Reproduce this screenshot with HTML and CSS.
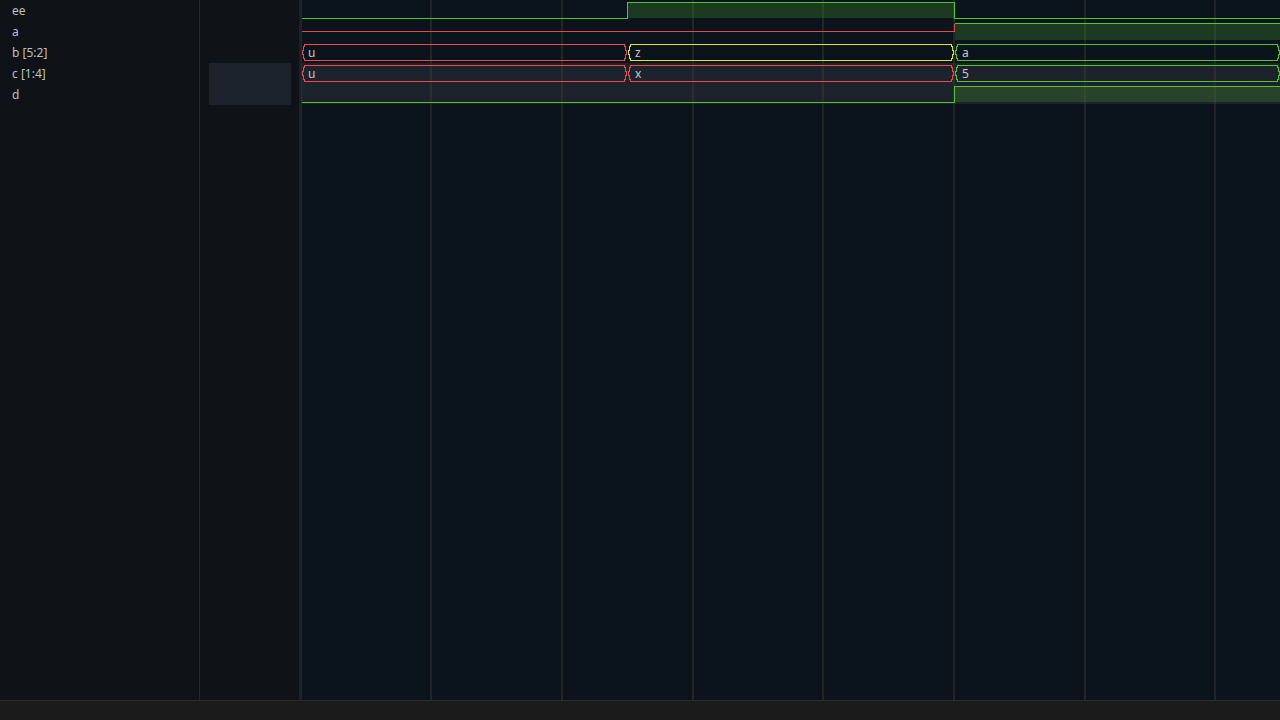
FILE: index.html
```html
<!DOCTYPE html>
<html>
<head>
<meta charset="utf-8">
<link rel="stylesheet" href="styles.css">
</head>
<body>
<div class="app">
  <div class="main">
    <div class="names">
      <div class="name">ee</div>
      <div class="name">a</div>
      <div class="name">b [5:2]</div>
      <div class="name">c [1:4]</div>
      <div class="name">d</div>
    </div>
    <div class="values">
      <div class="vrow"></div>
      <div class="vrow"></div>
      <div class="vrow"></div>
      <div class="vsel"></div>
    </div>
    <div class="sep"></div>
    <div class="wave">
      <svg class="canvas" width="979" height="700" viewBox="0 0 979 700" shape-rendering="crispEdges">
        <rect x="0" y="63" width="979" height="41" fill="#1c232c"/>
        <g fill="rgba(62,58,48,0.45)">
          <rect x="0" y="0" width="1" height="700"/>
          <rect x="129" y="0" width="2" height="700"/>
          <rect x="260" y="0" width="2" height="700"/>
          <rect x="391" y="0" width="2" height="700"/>
          <rect x="521" y="0" width="2" height="700"/>
          <rect x="652" y="0" width="2" height="700"/>
          <rect x="783" y="0" width="2" height="700"/>
          <rect x="913" y="0" width="2" height="700"/>
        </g>
        <!-- ee -->
        <rect x="327" y="3" width="326" height="15" fill="rgba(59,128,43,0.35)"/>
        <path d="M1 18.5 H326.5 V2.5 H653.5 V18.5 H979" fill="none" stroke="#52c424" stroke-width="1"/>
        <!-- a -->
        <rect x="654" y="24" width="325" height="16" fill="rgba(59,128,43,0.35)"/>
        <path d="M1 31.5 H653.5 V23.5" fill="none" stroke="#e84848" stroke-width="1"/>
        <path d="M654 23.5 H979" fill="none" stroke="#52c424" stroke-width="1"/>
        <!-- b, c -->
        <g fill="none" stroke-width="1.2">
          <polygon points="1.5,52.5 3.5,44.5 323.5,44.5 325.5,52.5 323.5,60.5 3.5,60.5" stroke="#f04848"/>
          <polygon points="327.5,52.5 329.5,44.5 650.5,44.5 652.5,52.5 650.5,60.5 329.5,60.5" stroke="#dce61e"/>
          <polygon points="654.5,52.5 656.5,44.5 976.5,44.5 978.5,52.5 976.5,60.5 656.5,60.5" stroke="#52c424"/>
          <polygon points="1.5,73.5 3.5,65.5 323.5,65.5 325.5,73.5 323.5,81.5 3.5,81.5" stroke="#f04848"/>
          <polygon points="327.5,73.5 329.5,65.5 650.5,65.5 652.5,73.5 650.5,81.5 329.5,81.5" stroke="#f04848"/>
          <polygon points="654.5,73.5 656.5,65.5 976.5,65.5 978.5,73.5 976.5,81.5 656.5,81.5" stroke="#52c424"/>
        </g>
        <g class="vtext">
          <text x="7" y="56.5">u</text>
          <text x="334" y="56.5">z</text>
          <text x="661" y="56.5">a</text>
          <text x="7" y="77.5">u</text>
          <text x="334" y="77.5">x</text>
          <text x="661" y="77.5">5</text>
        </g>
        <!-- d -->
        <rect x="654" y="87" width="325" height="15" fill="rgba(59,128,43,0.35)"/>
        <path d="M1 102.5 H653.5 V86.5 H979" fill="none" stroke="#52c424" stroke-width="1"/>
      </svg>
    </div>
  </div>
  <div class="status"></div>
</div>
</body>
</html>
```
FILE: styles.css
```css
html, body {
  margin: 0;
  padding: 0;
  background: #0f1317;
  overflow: hidden;
}
.app {
  width: 1280px;
  height: 720px;
  display: flex;
  flex-direction: column;
}
.main {
  height: 700px;
  display: flex;
  flex-direction: row;
}
.names {
  width: 187px;
  padding-left: 12px;
  border-right: 1px solid #24282c;
  background: #0f1317;
  font-family: "Noto Sans", "DejaVu Sans", sans-serif;
  font-size: 12px;
  color: #bcc0c4;
}
.name {
  height: 21px;
  line-height: 21px;
  white-space: nowrap;
}
.values {
  width: 82px;
  padding: 0 8px 0 9px;
  background: #0f1317;
}
.vrow {
  height: 21px;
}
.vsel {
  height: 42px;
  background: #1c232c;
}
.sep {
  width: 2px;
  background: #1d2125;
}
.wave {
  flex: 1;
  background: #0b141d;
  overflow: hidden;
}
.canvas {
  display: block;
}
.vtext text {
  font-family: "Noto Sans", "DejaVu Sans", sans-serif;
  font-size: 12px;
  fill: #c6c8ca;
}
.status {
  height: 19px;
  border-top: 1px solid #2a2a2a;
  background: #1b1b1b;
}
```
